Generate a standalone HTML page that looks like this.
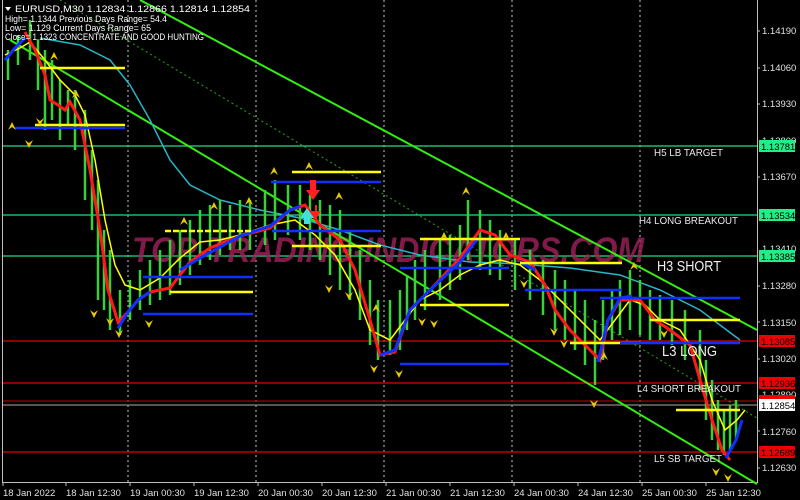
<!DOCTYPE html>
<html><head><meta charset="utf-8"><style>
html,body{margin:0;padding:0;background:#000;width:800px;height:500px;overflow:hidden}
svg{display:block}
text{font-family:"Liberation Sans",sans-serif}
</style></head><body>
<svg width="800" height="500" viewBox="0 0 800 500" xmlns="http://www.w3.org/2000/svg">
<rect width="800" height="500" fill="#000"/>
<line x1="2.5" y1="0" x2="2.5" y2="482" stroke="#c0c0c0"/>
<line x1="757.5" y1="0" x2="757.5" y2="482" stroke="#c0c0c0"/>
<line x1="2" y1="482.5" x2="758" y2="482.5" stroke="#c0c0c0"/>
<g stroke="#c8c8c8" stroke-dasharray="2,3">
<line x1="128" y1="0" x2="128" y2="482"/><line x1="256" y1="0" x2="256" y2="482"/>
<line x1="384" y1="0" x2="384" y2="482"/><line x1="512" y1="0" x2="512" y2="482"/>
<line x1="640" y1="0" x2="640" y2="482"/>
</g>
<g stroke-width="1.3">
<line x1="3" y1="146" x2="757" y2="146" stroke="#22dd88"/>
<line x1="3" y1="215" x2="757" y2="215" stroke="#22dd88"/>
<line x1="3" y1="256" x2="757" y2="256" stroke="#22dd88"/>
<line x1="3" y1="341" x2="757" y2="341" stroke="#e00000"/>
<line x1="3" y1="383" x2="757" y2="383" stroke="#e00000"/>
<line x1="3" y1="401" x2="757" y2="401" stroke="#990000"/>
<line x1="3" y1="405" x2="757" y2="405" stroke="#888"/>
<line x1="3" y1="452" x2="757" y2="452" stroke="#e00000"/>
</g>
<text x="132" y="262" font-size="35" font-weight="bold" font-style="italic" fill="#a0205a" fill-opacity="0.8" textLength="512" lengthAdjust="spacingAndGlyphs">TOP-TRADING-INDICATORS.COM</text>
<line x1="140" y1="0" x2="757" y2="330" stroke="#33ee11" stroke-width="2"/>
<line x1="10" y1="40" x2="757" y2="484" stroke="#33ee11" stroke-width="2"/>
<line x1="60" y1="0" x2="757" y2="418" stroke="#22aa11" stroke-dasharray="2,3"/>
<polyline fill="none" stroke="#2ab4c8" stroke-width="1.5" points="40,38 80,45 110,60 130,85 150,120 170,160 190,185 220,200 260,210 300,218 340,230 380,245 420,255 470,262 520,264 570,268 620,275 660,290 700,310 740,340"/>
<g stroke="#3ad03a" stroke-width="2.5">
<line x1="8" y1="50" x2="8" y2="80"/><line x1="18" y1="35" x2="18" y2="65"/><line x1="30" y1="20" x2="30" y2="60"/><line x1="38" y1="40" x2="38" y2="90"/>
<line x1="45" y1="50" x2="45" y2="130"/><line x1="52" y1="60" x2="52" y2="120"/><line x1="60" y1="80" x2="60" y2="140"/><line x1="68" y1="90" x2="68" y2="125"/><line x1="75" y1="90" x2="75" y2="150"/>
<line x1="85" y1="110" x2="85" y2="200"/><line x1="92" y1="150" x2="92" y2="230"/><line x1="98" y1="180" x2="98" y2="300"/><line x1="104" y1="230" x2="104" y2="310"/><line x1="110" y1="250" x2="110" y2="330"/><line x1="120" y1="290" x2="120" y2="335"/>
<line x1="130" y1="280" x2="130" y2="320"/><line x1="140" y1="270" x2="140" y2="310"/><line x1="150" y1="260" x2="150" y2="305"/><line x1="160" y1="250" x2="160" y2="300"/><line x1="170" y1="240" x2="170" y2="295"/><line x1="180" y1="230" x2="180" y2="285"/><line x1="190" y1="220" x2="190" y2="275"/><line x1="200" y1="210" x2="200" y2="265"/>
<line x1="210" y1="205" x2="210" y2="260"/><line x1="220" y1="200" x2="220" y2="255"/><line x1="230" y1="205" x2="230" y2="250"/><line x1="240" y1="200" x2="240" y2="250"/><line x1="250" y1="200" x2="250" y2="250"/><line x1="265" y1="190" x2="265" y2="245"/><line x1="275" y1="180" x2="275" y2="240"/><line x1="288" y1="185" x2="288" y2="235"/><line x1="300" y1="185" x2="300" y2="240"/>
<line x1="310" y1="195" x2="310" y2="250"/><line x1="320" y1="200" x2="320" y2="260"/><line x1="330" y1="205" x2="330" y2="275"/><line x1="340" y1="210" x2="340" y2="290"/><line x1="350" y1="230" x2="350" y2="300"/><line x1="360" y1="250" x2="360" y2="320"/><line x1="370" y1="280" x2="370" y2="345"/><line x1="378" y1="300" x2="378" y2="360"/>
<line x1="390" y1="300" x2="390" y2="355"/><line x1="400" y1="290" x2="400" y2="350"/><line x1="407" y1="275" x2="407" y2="330"/><line x1="415" y1="260" x2="415" y2="320"/><line x1="425" y1="250" x2="425" y2="310"/><line x1="440" y1="240" x2="440" y2="300"/><line x1="450" y1="235" x2="450" y2="290"/><line x1="460" y1="225" x2="460" y2="280"/><line x1="468" y1="200" x2="468" y2="260"/>
<line x1="480" y1="210" x2="480" y2="270"/><line x1="490" y1="220" x2="490" y2="275"/><line x1="500" y1="230" x2="500" y2="280"/><line x1="515" y1="240" x2="515" y2="290"/><line x1="530" y1="250" x2="530" y2="300"/><line x1="543" y1="260" x2="543" y2="315"/><line x1="555" y1="270" x2="555" y2="330"/>
<line x1="565" y1="280" x2="565" y2="340"/><line x1="575" y1="290" x2="575" y2="350"/><line x1="585" y1="300" x2="585" y2="365"/><line x1="595" y1="320" x2="595" y2="385"/><line x1="603" y1="300" x2="603" y2="360"/><line x1="612" y1="290" x2="612" y2="340"/><line x1="620" y1="280" x2="620" y2="335"/><line x1="630" y1="270" x2="630" y2="330"/>
<line x1="640" y1="280" x2="640" y2="335"/><line x1="650" y1="290" x2="650" y2="340"/><line x1="660" y1="295" x2="660" y2="340"/><line x1="672" y1="300" x2="672" y2="345"/><line x1="685" y1="310" x2="685" y2="360"/><line x1="700" y1="330" x2="700" y2="390"/><line x1="706" y1="360" x2="706" y2="420"/><line x1="712" y1="380" x2="712" y2="440"/><line x1="718" y1="400" x2="718" y2="450"/>
<line x1="724" y1="410" x2="724" y2="455"/><line x1="730" y1="405" x2="730" y2="450"/><line x1="736" y1="400" x2="736" y2="440"/>
</g>
<polyline fill="none" stroke="#ffff00" stroke-width="1.5" points="5,55 20,48 30,42 45,60 60,80 75,95 85,115 95,160 105,220 115,265 125,285 140,290 160,278 180,258 200,242 220,240 240,235 270,225 295,220 315,235 335,255 355,290 370,330 390,340 405,320 420,300 440,290 460,275 480,265 500,260 520,265 540,280 560,300 580,320 600,340 615,320 630,300 645,305 660,320 680,330 700,360 712,400 725,430 737,420 745,410"/>
<polyline fill="none" stroke="#ff1a1a" stroke-width="3" points="25,32 35,50 45,75 50,100 58,105 65,110 70,102 80,120 90,170 100,230 108,290 118,322 128,312 138,300 150,292 170,288 190,262 210,248 240,236 270,228 290,210 305,205 320,225 340,240 355,270 370,320 380,355 395,352 410,310 430,290 460,258 480,230 495,235 510,255 530,262 545,285 555,310 570,330 590,350 600,360 608,320 620,300 640,300 655,320 670,330 690,345 700,380 712,420 722,450 730,460"/>
<g fill="none" stroke="#1030ff" stroke-width="3">
<polyline points="5,60 15,48 25,38"/>
<polyline points="118,328 128,312 138,300 150,292"/>
<polyline points="180,270 200,258 240,236 270,226 290,210 300,206"/>
<polyline points="380,355 395,350 410,310 430,290 460,262 478,238"/>
<polyline points="520,262 535,270"/>
<polyline points="598,362 608,320 620,298 632,296"/>
<polyline points="726,458 736,440 742,420"/>
</g>
<g stroke-width="2.5">
<line x1="40" y1="68" x2="125" y2="68" stroke="#ffff00"/>
<line x1="35" y1="125" x2="125" y2="125" stroke="#ffff00"/>
<line x1="15" y1="128" x2="125" y2="128" stroke="#1030ff"/>
<line x1="165" y1="231" x2="253" y2="231" stroke="#ffff00" stroke-dasharray="6,2"/>
<line x1="143" y1="277" x2="253" y2="277" stroke="#1030ff"/>
<line x1="170" y1="292" x2="253" y2="292" stroke="#ffff00"/>
<line x1="143" y1="314" x2="253" y2="314" stroke="#1030ff"/>
<line x1="292" y1="172" x2="381" y2="172" stroke="#ffff00"/>
<line x1="271" y1="182" x2="381" y2="182" stroke="#1030ff"/>
<line x1="272" y1="231" x2="381" y2="231" stroke="#1030ff"/>
<line x1="292" y1="246" x2="381" y2="246" stroke="#ffff00"/>
<line x1="420" y1="239" x2="520" y2="239" stroke="#ffff00"/>
<line x1="400" y1="268" x2="509" y2="268" stroke="#1030ff"/>
<line x1="420" y1="305" x2="509" y2="305" stroke="#ffff00"/>
<line x1="400" y1="364" x2="509" y2="364" stroke="#1030ff"/>
<line x1="520" y1="263" x2="622" y2="263" stroke="#ffff00"/>
<line x1="525" y1="290" x2="622" y2="290" stroke="#1030ff"/>
<line x1="600" y1="298" x2="740" y2="298" stroke="#1030ff"/>
<line x1="650" y1="320" x2="740" y2="320" stroke="#ffff00"/>
<line x1="570" y1="343" x2="640" y2="343" stroke="#ffff00"/>
<line x1="620" y1="343" x2="740" y2="343" stroke="#1030ff"/>
<line x1="676" y1="410" x2="740" y2="410" stroke="#ffff00"/>
</g>
<g fill="#e6c800">
<path d="M8,130 l4,-8 l4,8 l-4,-3z"/><path d="M50,60 l4,-8 l4,8 l-4,-3z"/><path d="M36,118 l4,8 l4,-8 l-4,3z"/><path d="M25,140 l4,8 l4,-8 l-4,3z"/>
<path d="M72,98 l4,-8 l4,8 l-4,-3z"/><path d="M90,310 l4,8 l4,-8 l-4,3z"/><path d="M106,318 l4,8 l4,-8 l-4,3z"/><path d="M115,330 l4,8 l4,-8 l-4,3z"/>
<path d="M145,320 l4,8 l4,-8 l-4,3z"/><path d="M180,225 l4,-8 l4,8 l-4,-3z"/><path d="M210,210 l4,-8 l4,8 l-4,-3z"/><path d="M245,205 l4,-8 l4,8 l-4,-3z"/>
<path d="M270,175 l4,-8 l4,8 l-4,-3z"/><path d="M305,170 l4,-8 l4,8 l-4,-3z"/><path d="M335,200 l4,-8 l4,8 l-4,-3z"/><path d="M325,285 l4,8 l4,-8 l-4,3z"/>
<path d="M345,292 l4,8 l4,-8 l-4,3z"/><path d="M372,312 l4,-8 l4,8 l-4,-3z"/><path d="M370,365 l4,8 l4,-8 l-4,3z"/><path d="M395,370 l4,8 l4,-8 l-4,3z"/>
<path d="M418,318 l4,8 l4,-8 l-4,3z"/><path d="M430,320 l4,8 l4,-8 l-4,3z"/><path d="M462,195 l4,-8 l4,8 l-4,-3z"/><path d="M440,240 l4,-8 l4,8 l-4,-3z"/>
<path d="M502,240 l4,-8 l4,8 l-4,-3z"/><path d="M520,280 l4,8 l4,-8 l-4,3z"/><path d="M550,328 l4,8 l4,-8 l-4,3z"/><path d="M560,340 l4,8 l4,-8 l-4,3z"/>
<path d="M590,400 l4,8 l4,-8 l-4,3z"/><path d="M600,360 l4,-8 l4,8 l-4,-3z"/><path d="M630,270 l4,-8 l4,8 l-4,-3z"/><path d="M660,330 l4,8 l4,-8 l-4,3z"/>
<path d="M712,468 l4,8 l4,-8 l-4,3z"/><path d="M724,474 l4,8 l4,-8 l-4,3z"/>
</g>
<path d="M300,218 l7,-10 l7,10 l-4,0 l0,6 l-6,0 l0,-6z" fill="#40e0e0"/>
<path d="M310,180 l0,10 l-4,0 l7,10 l7,-10 l-4,0 l0,-10z" fill="#ff2020"/>
<path d="M315,205 l0,6 l-4,0 l5,8 l5,-8 l-4,0 l0,-6z" fill="#ff2020"/>
<path d="M5,7 l6,0 l-3,4z" fill="#fff"/>
<g fill="#fff" font-size="9.5">
<text x="15" y="12" textLength="235" lengthAdjust="spacingAndGlyphs">EURUSD,M30  1.12834 1.12866 1.12814 1.12854</text>
<text x="5" y="22" textLength="162" lengthAdjust="spacingAndGlyphs">High= 1.1344    Previous Days Range= 54.4</text>
<text x="5" y="31" textLength="146" lengthAdjust="spacingAndGlyphs">Low= 1.129    Current Days Range= 65</text>
<text x="5" y="40" textLength="199" lengthAdjust="spacingAndGlyphs">Close= 1.1323   CONCENTRATE AND GOOD HUNTING</text>
</g>
<g fill="#e8e8e8" font-size="10.5">
<text x="654" y="156" textLength="69" lengthAdjust="spacingAndGlyphs">H5 LB TARGET</text>
<text x="639" y="224" textLength="99" lengthAdjust="spacingAndGlyphs">H4 LONG BREAKOUT</text>
<text x="637" y="392" textLength="104" lengthAdjust="spacingAndGlyphs">L4 SHORT BREAKOUT</text>
<text x="654" y="462" textLength="68" lengthAdjust="spacingAndGlyphs">L5 SB TARGET</text>
</g>
<g fill="#f0f0f0" font-size="15">
<text x="657" y="271" textLength="64" lengthAdjust="spacingAndGlyphs">H3 SHORT</text>
<text x="662" y="356" textLength="55" lengthAdjust="spacingAndGlyphs">L3 LONG</text>
</g>
<g fill="#e0e0e0" font-size="9.5">
<text x="762" y="34">1.14190</text><text x="762" y="71">1.14060</text><text x="762" y="107">1.13930</text>
<text x="762" y="144">1.13800</text><text x="762" y="180">1.13670</text><text x="762" y="252">1.13410</text>
<text x="762" y="289">1.13280</text><text x="762" y="326">1.13150</text><text x="762" y="362">1.13020</text>
<text x="762" y="398">1.12890</text><text x="762" y="435">1.12760</text><text x="762" y="471">1.12630</text>
</g>
<g stroke="#c0c0c0"><line x1="757" y1="31" x2="760" y2="31"/><line x1="757" y1="68" x2="760" y2="68"/><line x1="757" y1="104" x2="760" y2="104"/><line x1="757" y1="177" x2="760" y2="177"/><line x1="757" y1="286" x2="760" y2="286"/><line x1="757" y1="322" x2="760" y2="322"/><line x1="757" y1="359" x2="760" y2="359"/><line x1="757" y1="431" x2="760" y2="431"/><line x1="757" y1="468" x2="760" y2="468"/></g>
<g font-size="9.5">
<rect x="759" y="140" width="36" height="12" fill="#22ee88"/><text x="761" y="150" fill="#000">1.13781</text>
<rect x="759" y="209" width="36" height="12" fill="#22ee88"/><text x="761" y="219" fill="#000">1.13534</text>
<rect x="759" y="250" width="36" height="12" fill="#22ee88"/><text x="761" y="260" fill="#000">1.13385</text>
<rect x="759" y="335" width="36" height="12" fill="#ee0000"/><text x="761" y="345" fill="#000">1.13085</text>
<rect x="759" y="377" width="36" height="12" fill="#ee0000"/><text x="761" y="387" fill="#000">1.12936</text>
<rect x="759" y="395" width="36" height="6" fill="#ee0000"/>
<rect x="759" y="399" width="36" height="12" fill="#fff"/><text x="761" y="409" fill="#000">1.12854</text>
<rect x="759" y="446" width="36" height="12" fill="#ee0000"/><text x="761" y="456" fill="#000">1.12689</text>
</g>
<g stroke="#c0c0c0"><line x1="3" y1="482" x2="3" y2="486"/><line x1="66" y1="482" x2="66" y2="486"/><line x1="130" y1="482" x2="130" y2="486"/><line x1="194" y1="482" x2="194" y2="486"/><line x1="258" y1="482" x2="258" y2="486"/><line x1="322" y1="482" x2="322" y2="486"/><line x1="386" y1="482" x2="386" y2="486"/><line x1="450" y1="482" x2="450" y2="486"/><line x1="514" y1="482" x2="514" y2="486"/><line x1="578" y1="482" x2="578" y2="486"/><line x1="642" y1="482" x2="642" y2="486"/><line x1="706" y1="482" x2="706" y2="486"/></g>
<g fill="#e0e0e0" font-size="9.5">
<text x="3" y="496">18 Jan 2022</text><text x="66" y="496">18 Jan 12:30</text><text x="130" y="496">19 Jan 00:30</text>
<text x="194" y="496">19 Jan 12:30</text><text x="258" y="496">20 Jan 00:30</text><text x="322" y="496">20 Jan 12:30</text>
<text x="386" y="496">21 Jan 00:30</text><text x="450" y="496">21 Jan 12:30</text><text x="514" y="496">24 Jan 00:30</text>
<text x="578" y="496">24 Jan 12:30</text><text x="642" y="496">25 Jan 00:30</text><text x="706" y="496">25 Jan 12:30</text>
</g>
</svg>
</body></html>
